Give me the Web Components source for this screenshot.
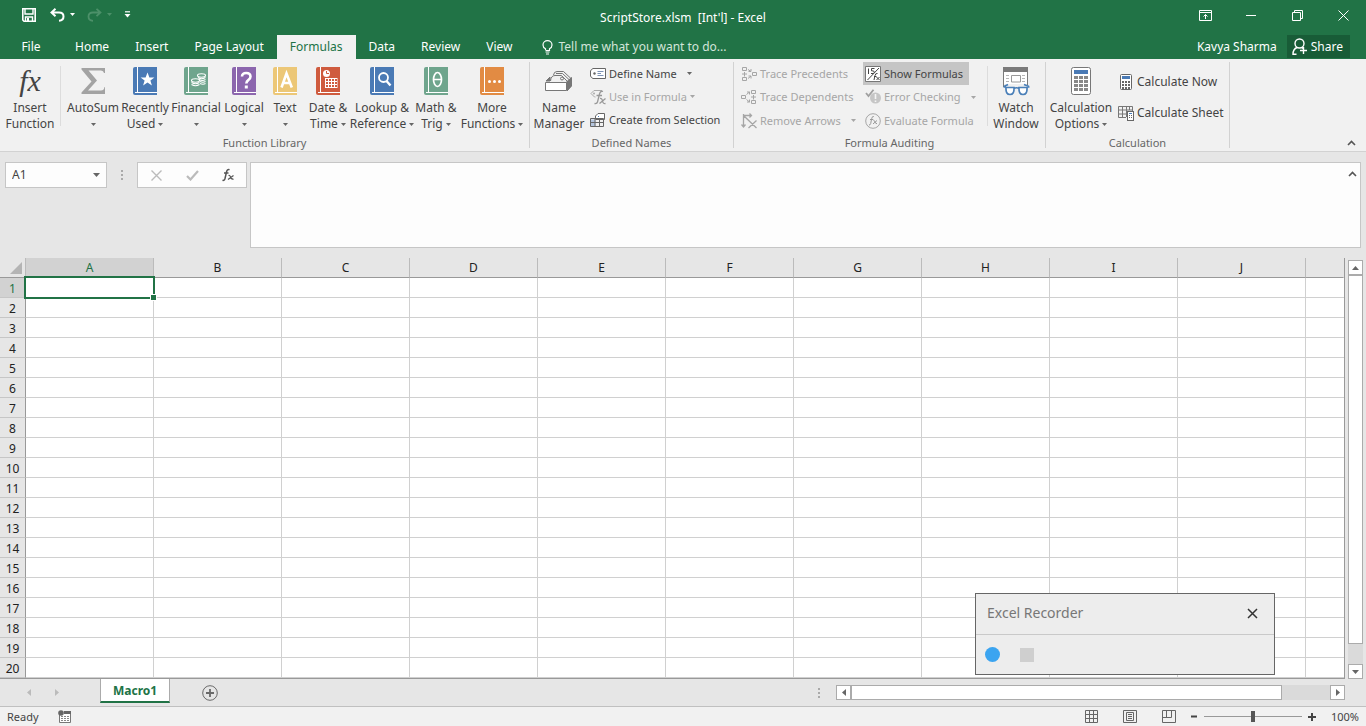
<!DOCTYPE html>
<html lang="en">
<head>
<meta charset="utf-8">
<title>ScriptStore.xlsm [Int'l] - Excel</title>
<style>
  body { margin:0; font:12px/16px "Noto Sans","Open Sans",sans-serif; color:#444; background:#e6e6e6; }
</style>
</head>
<body>
<excel-app></excel-app>

<script>
(function () {
  const GREEN = '#217346', DIM = '#a6a6a6';

  // ---- icons ------------------------------------------------------------
  const svg = (w, h, body) => `<svg width="${w}" height="${h}" viewBox="0 0 ${w} ${h}" fill="none" aria-hidden="true">${body}</svg>`;
  const book = (c, inner) => svg(24, 28, `
    <path d="M2 0H24V28H2Q0 28 0 26V2Q0 0 2 0Z" fill="${c}"/>
    <path d="M4.5 0V25M2 25.5H24" stroke="#fff"/>${inner}`);
  const cells = (x, y, nx, ny, w, h, sx, sy, c) => {
    let d = '';
    for (let j = 0; j < ny; j++) for (let i = 0; i < nx; i++) d += `M${x + i * sx} ${y + j * sy}h${w}v${h}h-${w}z`;
    return `<path d="${d}" fill="${c}"/>`;
  };

  const ICONS = {
    save: svg(14, 14, `<path d="M.8.8H13.2V13.2H2L.8 12Z" stroke="#fff" stroke-width="1.6"/><path d="M3 1V6H11V1M3.5 13V9H10.5V13" stroke="#fff" stroke-width="1.4"/><path d="M5 10h2v3H5z" fill="#fff"/>`),
    undo: svg(15, 14, `<path d="M5.5.8 1.5 4.5 5.5 8.2M2 4.5H9Q13.5 4.5 13.5 8.5T9 12.8" stroke="#fff" stroke-width="2"/>`),
    redo: svg(15, 14, `<path d="M9.5.8 13.5 4.5 9.5 8.2M13 4.5H6Q1.5 4.5 1.5 8.5T6 12.8" stroke="#4c9069" stroke-width="1.8"/>`),
    qat: svg(7, 7, `<path d="M1 .8H6" stroke="#fff" stroke-width="1.2"/><path d="M.5 3H6.5L3.5 6.5z" fill="#fff"/>`),
    down: svg(5, 3, `<path d="M0 0H5L2.5 3z" fill="currentColor"/>`),
    downBig: svg(7, 4, `<path d="M0 0H7L3.5 4z" fill="currentColor"/>`),
    upBig: svg(7, 4, `<path d="M0 4H7L3.5 0z" fill="currentColor"/>`),
    left: svg(4, 7, `<path d="M4 0V7L0 3.5z" fill="currentColor"/>`),
    right: svg(4, 7, `<path d="M0 0V7L4 3.5z" fill="currentColor"/>`),
    ribbonOpts: svg(13, 11, `<path d="M.5.5H12.5V10.5H.5zM1 2.5H12M6.5 9V4.5M4.5 6.5l2-2 2 2" stroke="#fff"/>`),
    minimize: svg(11, 11, `<path d="M0 5.5H10" stroke="#fff"/>`),
    restore: svg(11, 11, `<path d="M.5 2.5H8.5V10.5H.5zM2.5 2V.5H10.5V8.5H9" stroke="#fff"/>`),
    close: svg(11, 11, `<path d="M.5.5l10 10M10.5.5l-10 10" stroke="#fff"/>`),
    bulb: svg(11, 15, `<path d="M3.5 10V8.8Q1 7.5 1 5A4.5 4.3 0 0 1 10 5Q10 7.5 7.5 8.8V10.5H3.5M3.5 12H7.5M4 14H7" stroke="#fff" stroke-width="1.2"/>`),
    person: svg(16, 17, `<circle cx="7.5" cy="5.5" r="4.5" stroke="#fff" stroke-width="1.4"/><path d="M5 9.5Q1 11 1 16.3H4.5M10 9.5l1.5 1.5M11.5 9V16M8 12.5H15" stroke="#fff" stroke-width="1.4"/>`),
    fx: `<span class="fx">fx</span>`,
    sigma: svg(24, 28, `<path d="M.5 1H24V6H23Q22.5 3.5 20 3.5H7.5L16 13.5 7 23.5H20Q23 23.5 23.5 20H24V27H.5V25.5L10.5 14.5.5 2.5z" fill="#a3a3a3"/>`),
    recent: book('#4a7ab5', `<path d="M14.5 5.5l1.9 5h5l-4 3.1 1.5 5-4.4-3-4.4 3 1.5-5-4-3.1h5z" fill="#fff"/>`),
    financial: book('#6fa58d', `<g stroke="#fff" stroke-width="1.1"><ellipse cx="17.5" cy="8.5" rx="4" ry="1.7"/><path d="M14 10.5q3.5 2.5 7.5 0M15 12.5q3.5 2 6.5 0M16 14.5q3 1.5 5.5 0M16 16.5q3 1.5 5.5 0"/><ellipse cx="11.5" cy="13.5" rx="4" ry="1.7"/><path d="M7.5 15.5q4 2.5 8 0M7.5 17.5q4 2.5 8 0"/></g>`),
    logical: book('#8c66ae', `<path d="M10 9.5Q10 6 14.2 6T18.5 9.5Q18.5 11.5 16.5 12.8T14.3 16.5" stroke="#fff" stroke-width="2.6"/><path d="M12.8 18.5h3v3h-3z" fill="#fff"/>`),
    text: book('#ecc777', `<path d="M8.5 20.5 13.5 6.5 18.8 20.5M10.5 16H17" stroke="#fff" stroke-width="2.6"/>`),
    date: book('#cf5b3e', `<circle cx="10.5" cy="6.5" r="3.5" fill="#fff"/><path d="M10.5 4V6.5H13" stroke="#cf5b3e"/><path d="M9 11H21.5V21H9z" fill="#fff"/>${cells(10, 12, 4, 3, 2, 2, 3, 3, '#cf5b3e')}`),
    lookup: book('#4a7ab5', `<circle cx="13.5" cy="10.5" r="4.5" stroke="#fff" stroke-width="1.8"/><path d="M16.5 14 20.5 18.5" stroke="#fff" stroke-width="2.4"/>`),
    math: book('#6fa58d', `<ellipse cx="13.5" cy="12.5" rx="4" ry="7" stroke="#fff" stroke-width="1.7"/><path d="M9.5 12.5H17.5" stroke="#fff" stroke-width="1.5"/>`),
    more: book('#e28b43', `<g fill="#fff"><circle cx="9.5" cy="14.5" r="1.5"/><circle cx="14.5" cy="14.5" r="1.5"/><circle cx="19.5" cy="14.5" r="1.5"/></g>`),
    manager: svg(28, 28, `<g stroke="#777"><path d="M8.5 8Q9 4.5 12 4.5H18.5L26.5 12V18.5L22 23.5M11 6.5H17.5L25 13.5M5.5 14Q6 8.5 10 8.5H16.5L23 15" fill="#f1f1f1"/><path d="M21 15.5 26.5 10.5V19L22 24" fill="#777"/><path d="M.5 15.5H21.5V23.5H.5z" fill="#fff"/><path d="M1 14l4-4v4z" fill="#777"/><circle cx="17" cy="11.5" r="1.5"/></g>`),
    define: svg(17, 13, `<path d="M.5 4Q1 2.5 3 1.5H15.5V11.5H3Q1 10.5.5 9z" stroke="#666" fill="#fff"/><circle cx="4.5" cy="6.5" r="1.2" fill="#666"/><path d="M7.5 4.5H13.5M7.5 8.5H13.5M7.5 6.5H11" stroke="#7d93b5"/>`),
    useIn: svg(17, 16, `<path d="M1 4.5 4 1.5H12M1 4.5 4.5 8H5.5" stroke="#aaa"/><circle cx="4" cy="4.5" r="1" fill="#aaa"/><path d="M13 2.5Q10.5 1.5 9.5 5L7.5 13Q7 15 4.5 14.5M6.5 6.5H12M10 9.5Q12 9 12.5 12T15.5 14.5M15.5 9.5 9.5 14.5" stroke="#999" stroke-width="1.3"/>`),
    create: svg(16, 16, `<path d="M5.5 4 8 1.5H14.5V7.5H5.5z" stroke="#666" fill="#fff"/><path d="M1 7.5h4.5v6.5H1z" fill="#b4c5de"/><path d="M.5 6.5H13.5V14.5H.5zM.5 10.5H13.5M5 6.5V14.5M9.5 6.5V14.5" stroke="#666"/><path d="M8 4.5h1" stroke="#4a7ebb"/>`),
    precedents: svg(17, 16, `<g stroke="#a6a6a6"><path d="M1.5 1.5h4v3h-4zM1.5 11.5h4v3h-4zM1 8H6M3.5 6V10.5M11.5 6.5h4v3h-4z"/><path d="M7 3.5 10 5.5M10 3v2.5H7.5M7 12.5 10 10M10 12.5V10H7.5"/></g>`),
    dependents: svg(17, 16, `<g stroke="#a6a6a6"><path d="M.5 6.5h4v3h-4zM10.5 1.5h4v3h-4zM10.5 11.5h4v3h-4zM10 8H15M12.5 6V10.5"/><path d="M5.5 5.5 8.5 3M6 3h2.5v2.5M5.5 10.5 8.5 13M6 13h2.5v-2.5"/></g>`),
    remove: svg(17, 16, `<path d="M2.5 1V14M.5 11.5l2 2.5 2-2.5M3 2.5H10.5M8.5.5l2 2-2 2M3 3 15.5 15M15.5 7.5 7.5 15" stroke="#a6a6a6" stroke-width="1.3"/>`),
    show: svg(16, 16, `<path d="M.5.5H15.5V15.5H.5z" fill="#fff" stroke="#777"/><path d="M2.5 14 14 2M3.5 2.5V8M9.5 2.5H6.5V4.8Q9.5 4.5 9.3 6.300T6 7.500" stroke="#444"/><path d="M12.5 7.5Q10.5 7 10 9.5L9 14M9 10.5h2.5M11.5 11 14.5 14M14.5 11 11.5 14" stroke="#444"/>`),
    error: svg(17, 16, `<circle cx="10.5" cy="9" r="5.5" fill="#c6c6c6"/><path d="M10.5 5V10M10.5 11.5V13" stroke="#f5f5f5" stroke-width="1.6"/><path d="M1 4 3.5 7 8.5.8" stroke="#a0a0a0" stroke-width="1.8"/>`),
    evaluate: svg(16, 16, `<circle cx="8" cy="8" r="7.3" stroke="#a6a6a6"/><path d="M8.8 3.5Q7.2 3 6.7 5.5L5.7 10.5Q5.2 12.3 4 12M5 6.5H8.3M8.5 7.5Q9.5 7.2 10 9T12 10.7M12 7.5 8 10.9" stroke="#999"/>`),
    watch: svg(28, 30, `<path d="M1.5 2.5H25.5V18H1.5z" fill="#fff"/><path d="M1.5 21V2.5H25.5V19" stroke="#7a7a7a"/><path d="M1 1H26V6H1z" fill="#7a7a7a"/><path d="M4 9.5H7M4 12.5H7M4 15.5H7M20 9.5H23M20 12.5H23M20 15.5H23" stroke="#b5b5b5"/><path d="M9.5 9.5H18.5V16H9.5z" stroke="#999"/><g stroke="#4a7fb8" stroke-width="1.7"><path d="M6 18.5 2 20.5M22 18.5l5 2M1.5 21H4M25 21H27.5"/><path d="M4 21.5H12Q12.5 28.5 8 28.5T4 21.5zM17 21.5h8Q25.5 28.5 21 28.5T17 21.5zM12 22.5q2.5-1.5 5 0" fill="#fff"/></g>`),
    calcBig: svg(20, 28, `<rect x=".5" y=".5" width="19" height="27" rx="2" fill="#fff" stroke="#777"/><path d="M3 3H17V7H3z" fill="#4a7ab5"/>${cells(3, 9, 3, 4, 4, 3, 5, 4, '#888')}`),
    calcNow: svg(12, 16, `<rect x=".5" y=".5" width="11" height="15" rx="1" fill="#fff" stroke="#666"/><path d="M2 2H10V5H2z" fill="#4a7ab5"/>${cells(2, 7, 3, 3, 2, 2, 3, 3, '#666')}`),
    calcSheet: svg(17, 16, `<path d="M.5 1.5H14.5V6M.5 1.5V12.5H8M.5 5H14M.5 9H9M4.5 1.5V12M8.5 1.5V12M11.5 1.5V5" stroke="#777"/><rect x="9.5" y="6.5" width="6" height="9" fill="#fff" stroke="#666"/><path d="M11 8.5h3" stroke="#4a7ebb"/>${cells(11, 10, 2, 2, 1, 1, 2, 2, '#666')}`),
    collapse: svg(9, 6, `<path d="M1 5 4.5 1.5 8 5" stroke="#555" stroke-width="1.6"/>`),
    cancel: svg(11, 11, `<path d="M.5.5l10 10M10.5.5l-10 10" stroke="#bbb" stroke-width="1.4"/>`),
    tick: svg(13, 11, `<path d="M1 6 4.5 9.5 12 1" stroke="#bbb" stroke-width="2.2"/>`),
    fxSmall: svg(14, 14, `<path d="M8.5 1.8Q6.2.8 5.5 4L4 10.5Q3.4 12.8 1.5 12.3M3 5H7.5" stroke="#555" stroke-width="1.5"/><path d="M7.5 7.5Q9 7 9.5 9T12.5 11.3M12.5 7.5 7 11.5" stroke="#555" stroke-width="1.2"/>`),
    dots: svg(2, 12, `<path d="M0 1h2v2H0zM0 5h2v2H0zM0 9h2v2H0z" fill="#aaa"/>`),
    corner: svg(12, 12, `<path d="M12 0V12H0z" fill="#b4b4b4"/>`),
    add: svg(16, 16, `<circle cx="8" cy="8" r="7.3" stroke="#6a6a6a"/><path d="M4 8H12M8 4V12" stroke="#6a6a6a" stroke-width="1.8"/>`),
    macro: svg(14, 13, `<path d="M1.5 4V12.5H12.5V1.5H6" stroke="#777" fill="#fff"/><path d="M6 1h7v3H6z" fill="#666"/><circle cx="3" cy="3" r="2.8" fill="#666"/>${cells(3, 6, 3, 3, 2, 1, 3, 2, '#888')}`),
    viewNormal: svg(13, 13, `<path d="M.5.5H12.5V12.5H.5zM.5 4.5H12.5M.5 8.5H12.5M4.5.5V12.5M8.5.5V12.5" stroke="#666"/>`),
    viewLayout: svg(14, 13, `<path d="M.5.5H13.5V12.5H.5zM3.5 2.5H10.5V10.5H3.5zM5 4.5H9M5 6.5H9M5 8.5H9" stroke="#666"/>`),
    viewBreak: svg(14, 13, `<path d="M.5.5H13.5V12.5H.5zM4.5.5V7.5M9.5.5V7.5M1 7.5H9.5" stroke="#666"/>`),
    closeDark: svg(11, 11, `<path d="M1 1l9 9M10 1l-9 9" stroke="#333" stroke-width="1.5"/>`),
    minus: svg(7, 7, `<path d="M0 3.5H6" stroke="#444" stroke-width="2"/>`),
    plus: svg(8, 8, `<path d="M0 4H8M4 0V8" stroke="#444" stroke-width="2"/>`),
  };

  const BASE = `
    *, *::before, *::after { box-sizing:border-box; }
    button { font:inherit; color:inherit; background:none; border:0; padding:0; margin:0;
             display:inline-flex; align-items:center; justify-content:center; }
    svg { display:block; flex:none; }`;

  // small helper so every element gets an open root with the shared resets
  function define(name, html, setup) {
    customElements.define(name, class extends HTMLElement {
      connectedCallback() {
        if (this.shadowRoot) return;
        const root = this.attachShadow({ mode: 'open' });
        const tpl = document.createElement('template');
        tpl.innerHTML = `<style>${BASE}</style>` + (typeof html === 'function' ? html(this) : html);
        root.appendChild(tpl.content.cloneNode(true));
        if (setup) setup(this, root);
      }
    });
  }

  // ---- title bar ----------------------------------------------------------
  define('title-bar', `
    <style>
      :host { display:grid; grid-template-columns:1fr auto 1fr; height:35px; background:${GREEN}; color:#fff; }
      .qat { display:flex; align-items:center; padding:0 0 6px 22px; }
      .qat button + button { margin-left:12px; }
      .qat .first { margin-right:2px; }
      .qat button + .arrow { margin-left:5px; }
      .dim { color:#4c9069; }
      .title { align-self:center; white-space:pre; }
      .win { display:flex; justify-content:flex-end; height:30px; }
      .win button { width:46px; }
    </style>
    <div class="qat">
      <button class="first" aria-label="Save">${ICONS.save}</button>
      <button aria-label="Undo">${ICONS.undo}</button><button class="arrow" aria-label="Undo list">${ICONS.down}</button>
      <button aria-label="Redo" disabled>${ICONS.redo}</button><button class="arrow dim" aria-label="Redo list" disabled>${ICONS.down}</button>
      <button aria-label="Customize toolbar">${ICONS.qat}</button>
    </div>
    <span class="title"><slot></slot></span>
    <div class="win">
      <button aria-label="Ribbon display options">${ICONS.ribbonOpts}</button>
      <button aria-label="Minimize">${ICONS.minimize}</button>
      <button aria-label="Restore">${ICONS.restore}</button>
      <button aria-label="Close">${ICONS.close}</button>
    </div>`);

  // ---- ribbon tabs --------------------------------------------------------
  define('ribbon-tabs', `
    <style>
      :host { display:flex; align-items:stretch; height:24px; padding-right:16px; background:${GREEN}; color:#fff; }
      button { padding:0 13px; }
      .file { width:62px; }
      .on { background:#f1f1f1; color:${GREEN}; }
      .tell { gap:6px; padding:0 16px; color:#d3e5da; }
      .user { margin-left:auto; padding:0 10px; }
      .share { gap:3px; padding:0 7px 0 5px; background:#185c37; margin-bottom:1px; }
    </style>
    <button class="file">File</button><button>Home</button><button>Insert</button><button>Page Layout</button>
    <button class="on">Formulas</button><button>Data</button><button>Review</button><button>View</button>
    <button class="tell">${ICONS.bulb}Tell me what you want to do...</button>
    <button class="user">Kavya Sharma</button>
    <button class="share">${ICONS.person}Share</button>`);

  // ---- ribbon pieces ------------------------------------------------------
  define('ribbon-group', (h) => `
    <style>
      :host { display:flex; flex-direction:column; flex:none; width:${h.getAttribute('width')}px; border-right:1px solid #d2d2d2; margin:3px 0; }
      .body { display:flex; flex:none; height:73px; }
      .label { font-size:11px; line-height:16px; text-align:center; color:#666; }
    </style>
    <div class="body"><slot></slot></div>
    <div class="label">${h.getAttribute('label')}</div>`);

  define('ribbon-button', (h) => `
    <style>
      :host { display:block; flex:none; width:${h.getAttribute('width')}px; }
      button { display:flex; flex-direction:column; justify-content:flex-start; width:100%; white-space:nowrap; }
      .icon { display:flex; align-items:center; justify-content:center; height:38px; }
      .fx { font:italic 30px/38px "Liberation Serif",serif; }
      .line { display:flex; align-items:center; gap:3px; height:16px; }
      .line svg { color:#666; }
    </style>
    <button><span class="icon">${ICONS[h.getAttribute('icon')]}</span>
      <span class="line">${h.getAttribute('top')}</span>
      <span class="line">${h.getAttribute('bottom') || ''}${h.hasAttribute('menu') ? ICONS.down : ''}</span></button>`);

  define('ribbon-item', (h) => `
    <style>
      :host { display:block; }
      button { height:23px; padding:0 6px 0 1px; font-size:${h.hasAttribute('large') ? 12 : 11}px; white-space:nowrap; }
      .icon { display:flex; justify-content:center; width:18px; margin-right:2px; }
      .menu { margin-left:${h.getAttribute('gap') || 10}px; color:#666; }
      :host([pressed]) button { background:#c5c5c5; }
      button:disabled, button:disabled .menu { color:${DIM}; }
    </style>
    <button ${h.hasAttribute('disabled') ? 'disabled' : ''}><span class="icon">${ICONS[h.getAttribute('icon')]}</span><slot></slot>${
      h.hasAttribute('menu') ? `<span class="menu">${ICONS.down}</span>` : ''}</button>`);

  define('excel-ribbon', `
    <style>
      :host { display:flex; height:93px; background:#f1f1f1; border-bottom:1px solid #d2d2d2; }
      .sep { flex:none; width:1px; height:60px; margin:4px 2px 0 0; background:#dcdcdc; }
      .wide { margin-right:5px; }
      .stack { display:flex; flex-direction:column; flex:none; }
      .trace { width:124px; margin-left:5px; }
      .check { width:124px; }
      .calc { padding:8px 0; gap:8px; }
      .collapse { margin:0 10px 5px auto; align-self:flex-end; }
    </style>
    <ribbon-group label="Function Library" width="530">
      <ribbon-button width="60" icon="fx" top="Insert" bottom="Function"></ribbon-button>
      <span class="sep wide"></span>
      <ribbon-button width="54" icon="sigma" top="AutoSum" menu></ribbon-button>
      <ribbon-button width="50" icon="recent" top="Recently" bottom="Used" menu></ribbon-button>
      <ribbon-button width="52" icon="financial" top="Financial" menu></ribbon-button>
      <ribbon-button width="44" icon="logical" top="Logical" menu></ribbon-button>
      <ribbon-button width="38" icon="text" top="Text" menu></ribbon-button>
      <ribbon-button width="48" icon="date" top="Date &amp;amp;" bottom="Time" menu></ribbon-button>
      <ribbon-button width="60" icon="lookup" top="Lookup &amp;amp;" bottom="Reference" menu></ribbon-button>
      <ribbon-button width="48" icon="math" top="Math &amp;amp;" bottom="Trig" menu></ribbon-button>
      <ribbon-button width="64" icon="more" top="More" bottom="Functions" menu></ribbon-button>
    </ribbon-group>
    <ribbon-group label="Defined Names" width="204">
      <ribbon-button width="58" icon="manager" top="Name" bottom="Manager"></ribbon-button>
      <div class="stack">
        <ribbon-item icon="define" menu>Define Name</ribbon-item>
        <ribbon-item icon="useIn" disabled menu gap="3">Use in Formula</ribbon-item>
        <ribbon-item icon="create">Create from Selection</ribbon-item>
      </div>
    </ribbon-group>
    <ribbon-group label="Formula Auditing" width="312">
      <div class="stack trace">
        <ribbon-item icon="precedents" disabled>Trace Precedents</ribbon-item>
        <ribbon-item icon="dependents" disabled>Trace Dependents</ribbon-item>
        <ribbon-item icon="remove" disabled menu>Remove Arrows</ribbon-item>
      </div>
      <div class="stack check">
        <ribbon-item icon="show" pressed>Show Formulas</ribbon-item>
        <ribbon-item icon="error" disabled menu>Error Checking</ribbon-item>
        <ribbon-item icon="evaluate" disabled>Evaluate Formula</ribbon-item>
      </div>
      <span class="sep"></span>
      <ribbon-button width="52" icon="watch" top="Watch" bottom="Window"></ribbon-button>
    </ribbon-group>
    <ribbon-group label="Calculation" width="184">
      <ribbon-button width="70" icon="calcBig" top="Calculation" bottom="Options" menu></ribbon-button>
      <div class="stack calc">
        <ribbon-item large icon="calcNow">Calculate Now</ribbon-item>
        <ribbon-item large icon="calcSheet">Calculate Sheet</ribbon-item>
      </div>
    </ribbon-group>
    <button class="collapse" aria-label="Collapse the ribbon">${ICONS.collapse}</button>`);

  // ---- formula bar --------------------------------------------------------
  define('formula-bar', `
    <style>
      :host { display:flex; align-items:flex-start; padding:10px 5px; background:#e6e6e6; }
      .box { display:flex; align-items:center; height:26px; background:#fdfdfd; border:1px solid #c6c6c6; }
      .name { width:102px; padding-right:6px; }
      .name svg { color:#666; }
      input { flex:1; min-width:0; border:0; padding:0 6px; background:none; font:inherit; color:inherit; outline:0; }
      .grip { display:flex; align-items:center; justify-content:center; width:30px; height:26px; }
      .tools { width:110px; }
      .tools button { flex:1; }
      .edit { display:flex; align-items:flex-start; flex:1; height:86px; margin-left:3px; padding:0; }
      textarea { flex:1; height:100%; border:0; padding:4px 6px; resize:none; outline:0; font:inherit; background:none; }
      .edit button { padding:8px 3px; }
    </style>
    <div class="box name"><input value="A1" aria-label="Name box"><button aria-label="Name list">${ICONS.downBig}</button></div>
    <span class="grip">${ICONS.dots}</span>
    <div class="box tools">
      <button aria-label="Cancel">${ICONS.cancel}</button><button aria-label="Enter">${ICONS.tick}</button><button aria-label="Insert function">${ICONS.fxSmall}</button>
    </div>
    <div class="box edit"><textarea aria-label="Formula"></textarea><button aria-label="Collapse formula bar">${ICONS.collapse}</button></div>`);

  // ---- scroll bar ---------------------------------------------------------
  define('scroll-bar', (h) => {
    const v = h.hasAttribute('vertical');
    return `
    <style>
      :host { display:flex; flex-direction:${v ? 'column' : 'row'}; background:#dadada; }
      button { flex:none; width:15px; height:15px; background:#fff; border:1px solid #ababab; color:#666; }
      .thumb { flex:${h.getAttribute('thumb')}; background:#fff; border:1px solid #ababab; }
      .rest { flex:${h.getAttribute('rest')}; }
    </style>
    <button aria-label="Scroll back">${v ? ICONS.upBig : ICONS.left}</button>
    <span class="thumb"></span><span class="rest"></span>
    <button aria-label="Scroll forward">${v ? ICONS.downBig : ICONS.right}</button>`;
  });

  // ---- grid ---------------------------------------------------------------
  define('sheet-grid', `
    <style>
      :host { display:flex; flex:1; background:#e6e6e6; }
      .pane { flex:1; background:#fff; border-right:1px solid #999; border-bottom:1px solid #999; }
      table { width:100%; table-layout:fixed; border-collapse:separate; border-spacing:0; }
      th, td { height:20px; padding:0; font-weight:400; line-height:16px; }
      thead th { background:#e6e6e6; color:#222; border-bottom:1px solid #999; border-right:1px solid #bbb; }
      thead .corner { width:26px; }
      thead th:last-child { border-right-color:#e6e6e6; }
      .corner svg { margin-left:10px; }
      .col { width:128px; }
      tbody th { padding-top:2px; background:#e6e6e6; color:#222; border-right:1px solid #999; border-bottom:1px solid #c6c6c6; }
      td { border-right:1px solid #d0d0d0; border-bottom:1px solid #d0d0d0; }
      td:last-child { border-right:0; }
      thead th.on, tbody th.on { background:#d2d2d2; color:${GREEN}; }
      td.active { position:relative; }
      td.active::before { content:''; position:absolute; inset:-2px; border:2px solid ${GREEN}; }
      td.active::after { content:''; position:absolute; right:-3px; bottom:-3px; width:5px; height:5px; background:${GREEN}; outline:1px solid #fff; }
      scroll-bar { width:15px; margin:2px 3px 0 3px; }
    </style>
    <div class="pane"><table><thead><tr><th class="corner">${ICONS.corner}</th></tr></thead><tbody></tbody></table></div>
    <scroll-bar vertical thumb="369" rest="20"></scroll-bar>`, (host, root) => {
    const cols = 'ABCDEFGHIJ'.split('');
    root.querySelector('thead tr').insertAdjacentHTML('beforeend',
      cols.map((c, i) => `<th class="col${i ? '' : ' on'}" scope="col">${c}</th>`).join('') + '<th></th>');
    let rows = '';
    for (let r = 1; r <= 20; r++) {
      rows += `<tr><th scope="row"${r === 1 ? ' class="on"' : ''}>${r}</th>`;
      for (let c = 0; c <= cols.length; c++) rows += r === 1 && c === 0 ? '<td class="active"></td>' : '<td></td>';
      rows += '</tr>';
    }
    root.querySelector('tbody').innerHTML = rows;
  });

  // ---- sheet tabs ---------------------------------------------------------
  define('sheet-tabs', `
    <style>
      :host { display:flex; align-items:center; height:27px; padding-right:21px; background:#e6e6e6; }
      .nav { display:flex; gap:24px; width:100px; padding-left:27px; color:#bbb; }
      .tab { align-self:flex-start; height:24px; padding:2px 12px 0; background:#fff; color:${GREEN}; font-weight:700;
             border:1px solid #ababab; border-top:0; border-bottom:2px solid ${GREEN}; }
      .add { margin-left:32px; }
      .grip { margin-left:auto; margin-right:16px; }
      scroll-bar { width:38%; max-width:509px; height:15px; }
    </style>
    <div class="nav"><button aria-label="Previous sheet">${ICONS.left}</button><button aria-label="Next sheet">${ICONS.right}</button></div>
    <button class="tab">Macro1</button>
    <button class="add" aria-label="New sheet">${ICONS.add}</button>
    <span class="grip">${ICONS.dots}</span>
    <scroll-bar thumb="431" rest="48"></scroll-bar>`);

  // ---- status bar ---------------------------------------------------------
  define('status-bar', `
    <style>
      :host { display:flex; align-items:center; height:20px; padding:0 7px; background:#f1f1f1; border-top:1px solid #c0c0c0; font-size:11px; }
      .macro { margin-left:19px; }
      .views { display:flex; gap:25px; margin-left:auto; margin-right:15px; }
      input { appearance:none; width:98px; height:12px; margin:0 6px; background:linear-gradient(#999,#999) center/100% 1px no-repeat; }
      input::-webkit-slider-thumb { appearance:none; width:4px; height:11px; background:#555; }
      .zoom { margin-left:15px; }
    </style>
    <span>Ready</span>
    <button class="macro" aria-label="Record macro">${ICONS.macro}</button>
    <div class="views">
      <button aria-label="Normal">${ICONS.viewNormal}</button><button aria-label="Page layout">${ICONS.viewLayout}</button><button aria-label="Page break preview">${ICONS.viewBreak}</button>
    </div>
    <button aria-label="Zoom out">${ICONS.minus}</button>
    <input type="range" min="0" max="200" value="100" aria-label="Zoom">
    <button aria-label="Zoom in">${ICONS.plus}</button>
    <span class="zoom">100%</span>`);

  // ---- floating recorder --------------------------------------------------
  define('recorder-window', `
    <style>
      :host { display:block; width:300px; background:#ededed; border:1px solid #666; color:#777; }
      header { display:flex; align-items:center; justify-content:space-between; height:41px; padding:0 16px 2px 11px;
               font-size:14px; line-height:20px; border-bottom:1px solid #c9c9c9; }
      .tools { display:flex; align-items:center; gap:20px; height:39px; padding:0 9px; }
      .rec { width:15px; height:15px; border-radius:50%; background:#3ba4f0; }
      .stop { width:14px; height:14px; background:#cfcfcf; }
    </style>
    <header><slot></slot><button aria-label="Close recorder">${ICONS.closeDark}</button></header>
    <div class="tools"><button class="rec" aria-label="Record"></button><button class="stop" aria-label="Stop"></button></div>`);

  define('excel-app', `
    <style>
      :host { display:flex; flex-direction:column; position:relative; min-height:100vh; }
      recorder-window { position:absolute; right:91px; bottom:51px; }
    </style>
    <title-bar>ScriptStore.xlsm  [Int'l] - Excel</title-bar>
    <ribbon-tabs></ribbon-tabs>
    <excel-ribbon></excel-ribbon>
    <formula-bar></formula-bar>
    <sheet-grid></sheet-grid>
    <sheet-tabs></sheet-tabs>
    <status-bar></status-bar>
    <recorder-window>Excel Recorder</recorder-window>`);
})();
</script>
</body>
</html>
